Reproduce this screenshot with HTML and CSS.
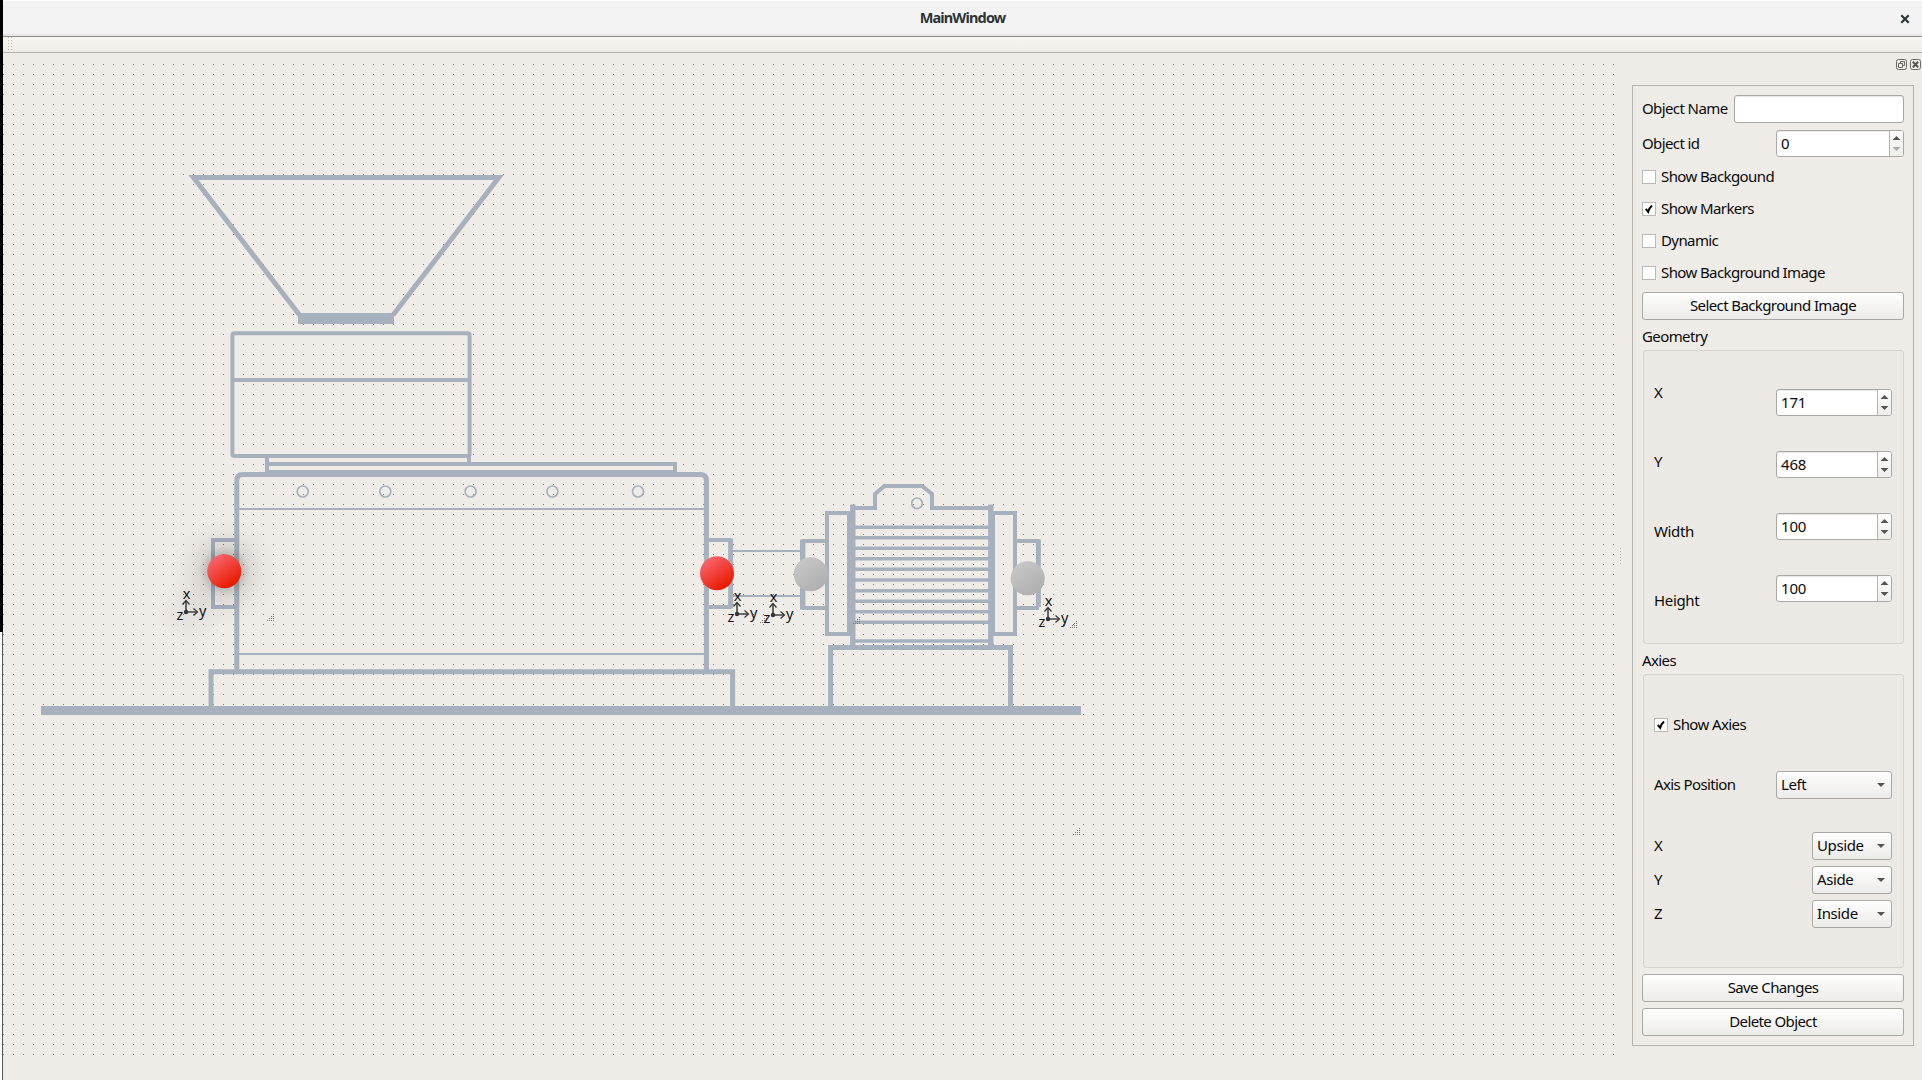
FILE: index.html
```
<!DOCTYPE html>
<html lang="en">
<head>
<meta charset="utf-8">
<title>MainWindow</title>
<link rel="stylesheet" href="styles.css">
</head>
<body>
<div class="edge"><div class="edge-top"></div><div class="edge-bottom"></div></div>
<div class="window">
  <header class="titlebar">
    <h1 class="title">MainWindow</h1>
    <svg class="close" width="10" height="10" viewBox="0 0 10 10"><path d="M1.3 1.3 8.7 8.7M8.7 1.3 1.3 8.7" stroke="#2e3436" stroke-width="2.2"/></svg>
  </header>
  <div class="toolbar"><div class="handle"></div></div>
  <main class="main">
    <svg class="canvas" width="1619" height="1027" viewBox="3 53 1619 1027">
      <defs>
        <pattern id="grid" x="3" y="64" width="10" height="10" patternUnits="userSpaceOnUse"><rect width="1" height="1" fill="#7b7975"/></pattern>
        <linearGradient id="red" x1=".2" y1=".1" x2=".75" y2=".9"><stop offset="0" stop-color="#f9646c"/><stop offset="1" stop-color="#e81a00"/></linearGradient>
        <linearGradient id="grey" x1=".2" y1=".1" x2=".75" y2=".9"><stop offset="0" stop-color="#c6c6c6"/><stop offset="1" stop-color="#b0b0b0"/></linearGradient>
        <radialGradient id="glow"><stop offset="0" stop-color="#222" stop-opacity=".4"/><stop offset=".3" stop-color="#222" stop-opacity=".25"/><stop offset=".45" stop-color="#222" stop-opacity=".1"/><stop offset=".7" stop-color="#222" stop-opacity=".03"/><stop offset="1" stop-color="#222" stop-opacity="0"/></radialGradient>
        <radialGradient id="haze"><stop offset="0" stop-color="#222" stop-opacity=".06"/><stop offset="1" stop-color="#222" stop-opacity="0"/></radialGradient>
        <g id="grip" fill="#7b7975"><path d="M0 0h1v1h-1zM-2 0h1v1h-1zM-4 0h1v1h-1zM-6 0h1v1h-1zM0-2h1v1h-1zM-2-2h1v1h-1zM-4-2h1v1h-1zM0-4h1v1h-1zM-2-4h1v1h-1zM0-6h1v1h-1z"/></g>
        <g id="axes">
          <path d="M0 0V-11M0 0H11" stroke="#444" stroke-width="1.6"/>
          <path d="M-3.5-7.5 0-11.5 3.5-7.5M7.5-3.5 11.5 0 7.5 3.500" fill="none" stroke="#333" stroke-width="1.2"/>
          <circle r="2.2" fill="#333"/>
          <text x=".5" y="-13.500" text-anchor="middle">x</text><text x="13" y="4">y</text><text x="-9.5" y="8">z</text>
        </g>
      </defs>
      <rect x="3" y="64" width="1611" height="991" fill="url(#grid)"/>
      <g class="machine">
        <!-- hopper -->
        <path d="M299.5 315 193.5 177.5H498.8L393 315" stroke-width="5"/>
        <path d="M298 318.5H394" stroke-width="11"/>
        <!-- feeder box -->
        <rect x="232.4" y="333.3" width="237.2" height="122.7" rx="2" stroke-width="4"/>
        <path d="M232 380H470" stroke-width="4"/>
        <path d="M267 457V473M469 457V464M265 464H675V472" stroke-width="4"/>
        <path d="M267 471.5H677" stroke-width="3"/>
        <!-- mixer body -->
        <path d="M236.8 670V480.5Q236.8 474.5 242.8 474.5H700.5Q706.4 474.5 706.4 480.5V670" stroke-width="5"/>
        <path d="M239 509H704M239 654H704" stroke-width="2"/>
        <g stroke-width="1.7"><circle cx="302.7" cy="491.5" r="5.5"/><circle cx="385.3" cy="491.5" r="5.5"/><circle cx="470.6" cy="491.5" r="5.5"/><circle cx="552.4" cy="491.5" r="5.5"/><circle cx="638" cy="491.5" r="5.5"/></g>
        <path d="M235 540H213V607H235M709 540H731" stroke-width="4"/>
        <path d="M709 607H731" stroke-width="4"/><path d="M730.6 538.5V608.5" stroke-width="5"/>
        <path d="M211 706V671.8H732.6V706" stroke-width="5"/>
        <!-- shaft -->
        <path d="M733 551H800M733 596H800" stroke-width="2"/>
        <!-- motor -->
        <path d="M802.7 539.5V609.5" stroke-width="5.4"/>
        <path d="M802 541H826M802 608H826" stroke-width="4"/>
        <rect x="827" y="513" width="22" height="121" stroke-width="4"/>
        <rect x="993" y="513" width="22" height="121" stroke-width="4"/>
        <path d="M852.8 504.5V646M990.8 504.5V646" stroke-width="5.4"/>
        <path d="M1017 541H1039M1017 608H1039" stroke-width="4"/><path d="M1038.4 539.5V607" stroke-width="5"/>
        <path d="M855 508H875V494L884.5 486H922L932 494V508H990" stroke-width="4"/>
        <circle cx="917" cy="503.3" r="5.3" stroke-width="1.7"/>
        <path d="M855 527.2H989M855 537.7H989M855 548.3H989M855 558.7H989M855 569.3H989M855 580H989M855 590.7H989M855 601.3H989M855 611.7H989M855 622.3H989M855 641H989" stroke-width="3.6"/>
        <path d="M830.6 706V647.5H1010.5V706" stroke-width="5"/>
        <path d="M41 710.5H1081" stroke-width="9"/>
      </g>
      <circle cx="224.3" cy="571" r="56" fill="url(#glow)"/>
      <circle cx="190" cy="612" r="36" fill="url(#haze)"/>
      <circle cx="224.3" cy="571.2" r="17" fill="url(#red)"/>
      <circle cx="717" cy="573.2" r="17" fill="url(#red)"/>
      <circle cx="810.7" cy="574.3" r="17" fill="url(#grey)"/>
      <circle cx="1027.7" cy="578.3" r="17" fill="url(#grey)"/>
      <use href="#grip" x="273" y="620"/><use href="#grip" x="766" y="622"/><use href="#grip" x="859" y="623"/><use href="#grip" x="1076" y="627"/><use href="#grip" x="1079" y="834"/>
      <use href="#axes" x="186" y="612"/><use href="#axes" x="737" y="614"/><use href="#axes" x="773" y="615"/><use href="#axes" x="1048" y="619"/>
      <path d="M1620.5 548V566" stroke="#b5b2ad" stroke-width="1" stroke-dasharray="1 2"/>
    </svg>
    <aside class="dock">
      <div class="dock-buttons">
        <svg width="11" height="11" viewBox="0 0 11 11" fill="none" stroke="#6b6966"><rect x=".5" y=".5" width="10" height="10" rx="2"/><path d="M4.5 4.500V2.500H8.500V6.500H6.500M2.500 4.500H6.500V8.500H2.500Z"/></svg>
        <svg width="11" height="11" viewBox="0 0 11 11" fill="none" stroke="#6b6966"><rect x=".5" y=".5" width="10" height="10" rx="2"/><path d="M2.800 2.800 8.200 8.200M8.200 2.800 2.800 8.200" stroke="#55534f" stroke-width="2"/></svg>
      </div>
      <section class="panel">
        <div class="row name-row"><span>Object Name</span><div class="input"></div></div>
        <div class="row id-row"><span>Object id</span><div class="spin wide at-min"><span class="val">0</span><div class="arrows"><i class="up"></i><i class="down"></i></div></div></div>
        <div class="checks">
          <div class="check"><i class="box"></i><span>Show Backgound</span></div>
          <div class="check"><i class="box"><svg width="12" height="12" viewBox="0 0 12 12"><path d="M2.800 5.800 5.200 8.800Q6.200 5 9 2.500" fill="none" stroke="#000" stroke-width="2"/></svg></i><span>Show Markers</span></div>
          <div class="check"><i class="box"></i><span>Dynamic</span></div>
          <div class="check"><i class="box"></i><span>Show Background Image</span></div>
        </div>
        <div class="button">Select Background Image</div>
        <div class="heading geometry-heading">Geometry</div>
        <div class="group geometry">
          <div class="labels"><span>X</span><span>Y</span><span>Width</span><span>Height</span></div>
          <div class="spins">
            <div class="spin"><span class="val">171</span><div class="arrows"><i class="up"></i><i class="down"></i></div></div>
            <div class="spin"><span class="val">468</span><div class="arrows"><i class="up"></i><i class="down"></i></div></div>
            <div class="spin"><span class="val">100</span><div class="arrows"><i class="up"></i><i class="down"></i></div></div>
            <div class="spin"><span class="val">100</span><div class="arrows"><i class="up"></i><i class="down"></i></div></div>
          </div>
        </div>
        <div class="heading axes-heading">Axies</div>
        <div class="group axes-group">
          <div class="check"><i class="box"><svg width="12" height="12" viewBox="0 0 12 12"><path d="M2.800 5.800 5.200 8.800Q6.200 5 9 2.500" fill="none" stroke="#000" stroke-width="2"/></svg></i><span>Show Axies</span></div>
          <div class="row position-row"><span>Axis Position</span><div class="combo wide"><span>Left</span><i class="down"></i></div></div>
          <div class="directions">
            <div class="row"><span>X</span><div class="combo"><span>Upside</span><i class="down"></i></div></div>
            <div class="row"><span>Y</span><div class="combo"><span>Aside</span><i class="down"></i></div></div>
            <div class="row"><span>Z</span><div class="combo"><span>Inside</span><i class="down"></i></div></div>
          </div>
        </div>
        <div class="button save">Save Changes</div>
        <div class="button">Delete Object</div>
      </section>
    </aside>
  </main>
</div>
</body>
</html>
```
FILE: styles.css
```
* { box-sizing: border-box; }
body {
  margin: 0;
  width: 1922px;
  height: 1080px;
  overflow: hidden;
  display: flex;
  background: #efebe7;
  color: #0a0a0a;
  font: 15px/20px "Noto Sans", sans-serif;
  letter-spacing: -0.6px;
  white-space: nowrap;
}
svg { display: block; }
.edge { width: 3px; display: flex; flex-direction: column; }
.edge-top { height: 632px; background: #000; }
.edge-bottom { flex: 1; background: #fff; border-right: 1px solid #555; }
.window { width: 1919px; display: flex; flex-direction: column; }
.titlebar {
  height: 37px;
  display: grid;
  grid-template-columns: 1fr auto 1fr;
  align-items: center;
  padding-right: 12px;
  border-top: 1px solid #fff;
  border-bottom: 1px solid #8b8e8b;
  background: linear-gradient(#f3f3f3 32px, #e0e0de 35px);
}
.title {
  grid-column: 2;
  margin: 0;
  padding: 0 0 3px 12px;
  font-size: 14.5px;
  line-height: 20px;
  font-weight: 700;
  letter-spacing: -0.85px;
  color: #2e3436;
}
.close { justify-self: end; }
.toolbar {
  height: 16px;
  padding-left: 5px;
  border-bottom: 1px solid #b6b2ae;
  background: linear-gradient(#f8f5ef, #efebe7);
}
.handle {
  width: 5px;
  height: 15px;
  background: conic-gradient(from 270deg at 1px 1px, #bbb7b2 90deg, transparent 0) 0 0 / 3px 3px;
}
.main { flex: 1; display: flex; }
.canvas { flex: none; }
.canvas text { font-size: 14.5px; fill: #111; letter-spacing: 0; }
.machine { fill: none; stroke: #a7b1be; }
.dock { width: 300px; padding: 6px 0 0 10px; display: flex; flex-direction: column; }
.dock-buttons { display: flex; justify-content: flex-end; gap: 3px; padding-right: 1px; height: 26px; }
.panel {
  width: 282px;
  height: 961px;
  padding: 9px;
  border: 1px solid #b6b3ae;
  display: flex;
  flex-direction: column;
}
.row { display: flex; justify-content: space-between; align-items: center; }
.row span, .check span { padding-bottom: 2px; }
.input, .spin, .combo, .button {
  border: 1px solid #aba8a4;
  border-radius: 3px;
}
.input { width: 170px; height: 28px; background: #fff; box-shadow: inset 0 1px #e8e8e8; }
.id-row { margin-top: 7px; }
.spin {
  width: 116px;
  height: 27px;
  display: flex;
  background: #fff;
  overflow: hidden;
  box-shadow: inset 0 1px #e8e8e8;
}
.spin.wide { width: 128px; }
.spin .val { flex: 1; padding: 2px 0 0 4px; letter-spacing: -0.15px; }
.arrows {
  width: 14px;
  border-left: 1px solid #b6b3ae;
  background: linear-gradient(#fdfdfd, #eeedeb);
  display: flex;
  flex-direction: column;
  align-items: center;
  padding-top: 5px;
  gap: 7px;
}
.up, .down { width: 8px; height: 4px; background: #555; }
.up { clip-path: polygon(50% 0, 100% 100%, 0 100%); }
.down { clip-path: polygon(0 0, 100% 0, 50% 100%); }
.at-min .down { background: #aaa; }
.checks { margin-top: 10px; display: flex; flex-direction: column; gap: 12px; }
.check { height: 20px; display: flex; align-items: center; gap: 5px; }
.box { width: 14px; height: 14px; border: 1px solid #bbb7b3; background: #fff; }
.button {
  height: 28px;
  flex: none;
  line-height: 24px;
  text-align: center;
  background: linear-gradient(#fefefe, #ecebe9);
}
.checks + .button { margin-top: 9px; }
.heading { height: 20px; }
.geometry-heading { margin: 6px 0 4px; }
.axes-heading { margin: 6px 0 4px; }
.group {
  height: 294px;
  margin-left: 1px;
  border: 1px solid #d6d2ce;
  border-radius: 3px;
  background: #ece9e4;
}
.geometry { display: flex; justify-content: space-between; padding: 0 11px 0 10px; }
.labels { padding-top: 31px; display: flex; flex-direction: column; gap: 49.3px; letter-spacing: -0.35px; }
.spins { padding-top: 38px; display: flex; flex-direction: column; gap: 35px; }
.axes-group { padding: 40px 11px 0 10px; }
.position-row { margin-top: 36px; }
.combo {
  width: 80px;
  height: 28px;
  padding: 0 6px 0 4px;
  display: flex;
  align-items: center;
  justify-content: space-between;
  letter-spacing: -0.4px;
  background: linear-gradient(#fefefe, #ecebe9);
}
.combo.wide { width: 116px; }
.directions { margin-top: 33px; display: flex; flex-direction: column; gap: 6px; }
.save { margin: 6px 0; }
```
